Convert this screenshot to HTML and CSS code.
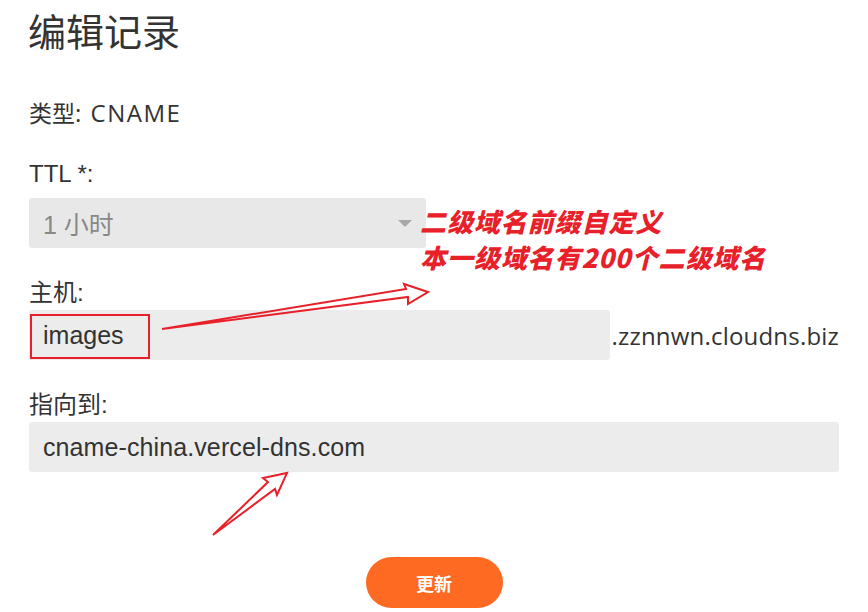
FILE: index.html
```html
<!DOCTYPE html>
<html lang="zh">
<head>
<meta charset="utf-8">
<title>编辑记录</title>
<link rel="stylesheet" href="styles.css">
</head>
<body>
<div class="page">
  <h1 class="title">编辑记录</h1>
  <div class="type-line">类型<span class="latin">: CNAME</span></div>

  <div class="field field-ttl">
    <label class="label">TTL *:</label>
    <div class="select">
      <span class="select-text">1 小时</span>
      <span class="caret"></span>
    </div>
  </div>

  <div class="field field-host">
    <label class="label">主机:</label>
    <div class="host-row">
      <div class="input host-input"><span class="input-text">images</span></div>
      <span class="suffix latin">.zznnwn.cloudns.biz</span>
    </div>
  </div>

  <div class="field field-target">
    <label class="label">指向到:</label>
    <div class="input target-input"><span class="input-text">cname-china.vercel-dns.com</span></div>
  </div>

  <div class="actions">
    <button class="btn">更新</button>
  </div>

  <div class="note">
    <div>二级域名前缀自定义</div>
    <div>本一级域名有200个二级域名</div>
  </div>
  <div class="highlight"></div>
  <svg class="arrows" width="868" height="612" viewBox="0 0 868 612">
    <polygon points="162,329 406,289 404,284 428,292 408,304 408,297" fill="none" stroke="#e8202a" stroke-width="2" stroke-linejoin="miter"/>
    <polygon points="213,535 268,482 263,478 287,473 277,495 275,489" fill="none" stroke="#e8202a" stroke-width="2" stroke-linejoin="miter"/>
  </svg>
</div>
</body>
</html>
```

FILE: styles.css
```css
html, body {
  margin: 0;
  padding: 0;
  background: #ffffff;
}
.page {
  position: relative;
  width: 868px;
  height: 612px;
  box-sizing: border-box;
  padding: 7px 29px 0 29px;
  display: flex;
  flex-direction: column;
  color: #333333;
  font-family: "Open Sans", "Noto Sans CJK SC", sans-serif;
  overflow: hidden;
}
.title {
  margin: 0 0 0 -1px;
  font-size: 38px;
  line-height: 46px;
  font-weight: 400;
  color: #333;
  font-family: "Noto Sans CJK SC", sans-serif;
}
.type-line {
  margin-top: 44px;
  font-size: 23px;
  line-height: 30px;
  font-family: "Noto Sans CJK SC", sans-serif;
}
.type-line .latin {
  font-size: 24px;
  letter-spacing: 1.5px;
}
.latin {
  font-family: "Open Sans", sans-serif;
}
.field {
  display: flex;
  flex-direction: column;
}
.label {
  font-size: 24px;
  line-height: 30px;
  font-family: "Liberation Sans", "Noto Sans CJK SC", sans-serif;
}
.field-ttl { margin-top: 31px; }
.field-ttl .label { margin-bottom: 9px; }
.field-host { margin-top: 30px; }
.field-host .label { margin-bottom: 2px; }
.field-target { margin-top: 30px; }
.field-target .label { margin-bottom: 2px; }

.select {
  height: 50px;
  width: 397px;
  background: #e8e8e8;
  border-radius: 3px;
  display: flex;
  align-items: center;
  justify-content: space-between;
  padding: 0 14px 0 14px;
  box-sizing: border-box;
}
.select-text {
  font-family: "Liberation Sans", "Noto Sans CJK SC", sans-serif;
  font-size: 25px;
  color: #888888;
}
.caret {
  width: 0;
  height: 0;
  border-left: 7px solid transparent;
  border-right: 7px solid transparent;
  border-top: 7px solid #a8a8a8;
  margin-top: 1px;
}
.host-row {
  display: flex;
  align-items: center;
}
.input {
  height: 50px;
  background: #ececec;
  border-radius: 3px;
  display: flex;
  align-items: center;
  padding: 0 14px;
  box-sizing: border-box;
}
.host-input {
  width: 582px;
}
.target-input {
  width: 810px;
}
.input-text {
  font-family: "Liberation Sans", sans-serif;
  font-size: 25px;
  color: #333;
}
.target-input .input-text {
  letter-spacing: 0.1px;
}
.suffix {
  margin-left: 1px;
  font-size: 24px;
  letter-spacing: 0.2px;
  color: #333;
}
.actions {
  display: flex;
  justify-content: center;
  margin-top: 85px;
}
.btn {
  width: 137px;
  height: 51px;
  border: none;
  border-radius: 26px;
  background: #ff6a22;
  color: #ffffff;
  font-family: "Noto Sans CJK SC", sans-serif;
  font-weight: 700;
  font-size: 18px;
  padding: 0;
}
.note {
  position: absolute;
  left: 420px;
  top: 203px;
  color: #e8202a;
  font-family: "Noto Sans CJK SC", sans-serif;
  font-weight: 900;
  font-style: italic;
  font-size: 26px;
  line-height: 36px;
  letter-spacing: 0.9px;
}
.highlight {
  position: absolute;
  left: 30px;
  top: 314px;
  width: 120px;
  height: 45px;
  border: 2px solid #e8202a;
  box-sizing: border-box;
}
.arrows {
  position: absolute;
  left: 0;
  top: 0;
  pointer-events: none;
}
```
